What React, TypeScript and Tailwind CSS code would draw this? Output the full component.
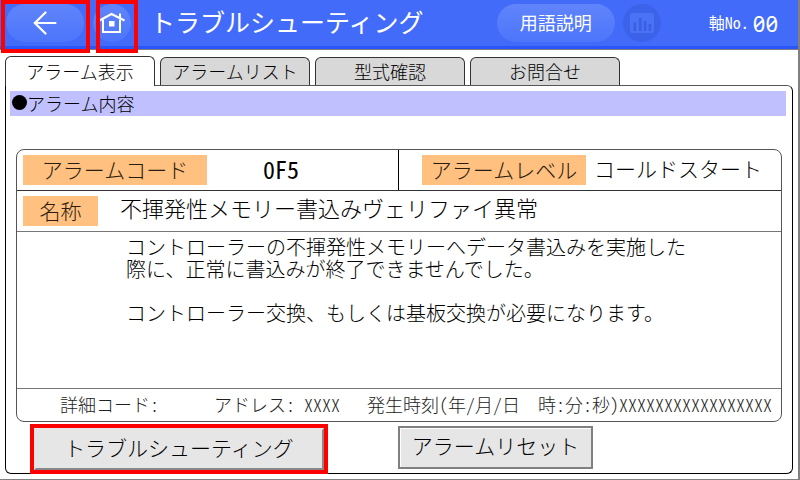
import { useState } from "react";
import type { ReactNode } from "react";

const TABS = ["アラーム表示", "アラームリスト", "型式確認", "お問合せ"];

function BackIcon() {
  return (
    <svg width="24" height="24" viewBox="0 0 24 24" fill="none" stroke="#fff" strokeWidth="2.2" strokeLinecap="round">
      <path d="M12.5 1.5 L1.8 12 L12.5 22.5 M1.8 12 H22.5" />
    </svg>
  );
}

function HomeIcon() {
  return (
    <svg width="26" height="22" viewBox="0 0 26 22" fill="none" stroke="#fff" strokeWidth="2">
      <path d="M0.5 8.5 L12.5 2 L25.5 8.5" />
      <path d="M4 7.5 V20 H21 V7.5" />
      <path d="M21 1.5 V7" />
      <rect x="10" y="9" width="5.5" height="5.5" fill="#fff" stroke="none" />
    </svg>
  );
}

function ChartIcon() {
  return (
    <svg width="24" height="20" viewBox="0 0 24 20">
      <rect width="24" height="20" rx="2.5" fill="#4a72f6" />
      <g fill="#3a5fdf">
        <rect x="3.5" y="9.5" width="2.6" height="8.5" />
        <rect x="9" y="5" width="2.6" height="13" />
        <rect x="13.8" y="8" width="2.6" height="10" />
        <rect x="18.6" y="11" width="2.6" height="7" />
      </g>
    </svg>
  );
}

// red frame laid over a control
function Highlight() {
  return <span className="pointer-events-none absolute inset-0 border-4 border-[#ff0000]" />;
}

function Label({ children, className = "" }: { children: ReactNode; className?: string }) {
  return (
    <span className={`flex h-[30px] shrink-0 items-center justify-center bg-[#ffc080] pb-0.5 text-[21px] font-light leading-none text-[#2a1c10] ${className}`}>
      {children}
    </span>
  );
}

// half-width forms, so that two latin characters take one kanji cell
function Half({ children }: { children: ReactNode }) {
  return <span className="[font-feature-settings:'hwid']">{children}</span>;
}

export default function App() {
  const [active, setActive] = useState(0);

  return (
    <div className="flex min-h-screen flex-col border-b border-r-2 border-[#808080] bg-white font-['Noto_Sans_CJK_JP',sans-serif] text-black">
      <header className="flex h-[50px] shrink-0 items-start border-b border-[#7f7f7f] bg-[#436bfa] text-white shadow-[inset_0_-3px_0_#2b55fa]">
        <div className="relative ml-px h-[53px] w-[89px] px-[5px] pt-1">
          <button aria-label="戻る" className="flex h-[38px] w-[78px] items-center justify-center rounded-full bg-linear-to-b from-[#6084fb] to-[#4d75fb]">
            <BackIcon />
          </button>
          <Highlight />
        </div>
        <div className="relative ml-1.5 h-[53px] w-[42px] pt-1">
          <button aria-label="ホーム" className="-ml-[3px] flex size-[38px] items-center justify-center rounded-full bg-linear-to-b from-[#6084fb] to-[#4d75fb]">
            <HomeIcon />
          </button>
          <Highlight />
        </div>
        <h1 className="ml-3 flex h-[46px] items-center pb-1 text-[25px] leading-none">トラブルシューティング</h1>
        <div className="ml-auto flex h-[46px] items-center pr-5">
          <button className="h-[38px] w-[118px] rounded-full bg-linear-to-b from-[#6084fb] to-[#4d75fb] pb-0.5 text-lg leading-none">
            用語説明
          </button>
          <button aria-label="グラフ" disabled className="ml-2 flex size-[38px] items-center justify-center rounded-full bg-[#3c62ea]">
            <ChartIcon />
          </button>
          <span className="ml-12 pb-0.5 text-base leading-none">
            軸<Half>No.</Half>
          </span>
          <span className="ml-1 font-['Noto_Sans',sans-serif] text-[22px] leading-none slashed-zero">00</span>
        </div>
      </header>

      <main className="flex flex-1 flex-col px-[5px] pb-[5px] pt-1.5">
        <div role="tablist" className="flex items-end gap-[5px]">
          {TABS.map((tab, i) => (
            <button
              key={tab}
              role="tab"
              aria-selected={i === active}
              onClick={() => setActive(i)}
              className={
                i === active
                  ? "relative -mb-px h-[30px] w-[150px] rounded-t-md border border-b-0 border-[#333] bg-white pb-0.5 text-lg font-light leading-none"
                  : "h-[28px] w-[150px] rounded-t-md border border-b-0 border-[#333] bg-[#d8d8d8] pb-0.5 text-lg font-light leading-none"
              }
            >
              {tab}
            </button>
          ))}
        </div>

        <section className="flex flex-1 flex-col rounded-b-md rounded-tr-md border border-black border-t-[#555] px-1 pt-[5px]">
          <h2 className="mr-0.5 flex h-[25px] items-center bg-[#c0c0ff] pb-0.5 text-lg font-light leading-none">
            <span className="ml-0.5 size-[15px] rounded-full bg-black" />
            アラーム内容
          </h2>

          <div className="ml-1.5 mr-1.5 mt-[33px] flex flex-1 flex-col rounded-lg border border-[#555]">
            <div className="grid h-[41px] grid-cols-2 border-b border-[#333]">
              <div className="flex items-center border-r border-black pl-1.5">
                <Label className="w-[184px]">アラームコード</Label>
                <span className="ml-14 pb-0.5 text-2xl leading-none">
                  <Half>0F5</Half>
                </span>
              </div>
              <div className="flex items-center pl-[23px]">
                <Label className="w-[164px]">アラームレベル</Label>
                <span className="ml-2 pb-1 text-[21px] font-light leading-none">コールドスタート</span>
              </div>
            </div>
            <div className="flex h-[41px] items-center border-b border-[#777] pl-1.5">
              <Label className="w-[75px]">名称</Label>
              <span className="ml-[22px] pb-2 text-[22px] font-light leading-none">不揮発性メモリー書込みヴェリファイ異常</span>
            </div>
            <div className="flex-1 pl-[109px] pt-1 text-xl font-light leading-[22px]">
              <p>
                コントローラーの不揮発性メモリーへデータ書込みを実施した
                <br />
                際に、正常に書込みが終了できませんでした。
              </p>
              <p className="mt-[22px]">コントローラー交換、もしくは基板交換が必要になります。</p>
            </div>
            <div className="flex h-[33px] items-center justify-between border-t border-[#777] pb-0.5 pl-[43px] pr-[9px] text-lg font-light leading-none text-[#222]">
              <span>
                詳細コード<Half>:</Half>
              </span>
              <span className="ml-7">
                アドレス<Half>: XXXX</Half>
              </span>
              <span>
                発生時刻<Half>(</Half>年<Half>/</Half>月<Half>/</Half>日<Half>&nbsp;&nbsp;</Half>時<Half>:</Half>分<Half>:</Half>秒<Half>)XXXXXXXXXXXXXXXXX</Half>
              </span>
            </div>
          </div>

          <div className="-mb-px mt-0.5 flex items-start pl-5">
            <div className="relative p-1">
              <button className="block h-[42px] w-[290px] border-2 border-[#888] border-l-[#e6e6e6] border-t-[#e6e6e6] bg-[#e6e6e6] pb-1 text-[21px] font-light leading-none">
                トラブルシューティング
              </button>
              <Highlight />
            </div>
            <button className="ml-[70px] mt-0.5 h-[43px] w-[195px] border-2 border-[#808080] bg-[#e6e6e6] pb-1 text-[21px] font-light leading-none shadow-[inset_1px_1px_0_#fff]">
              アラームリセット
            </button>
          </div>
        </section>
      </main>
    </div>
  );
}
